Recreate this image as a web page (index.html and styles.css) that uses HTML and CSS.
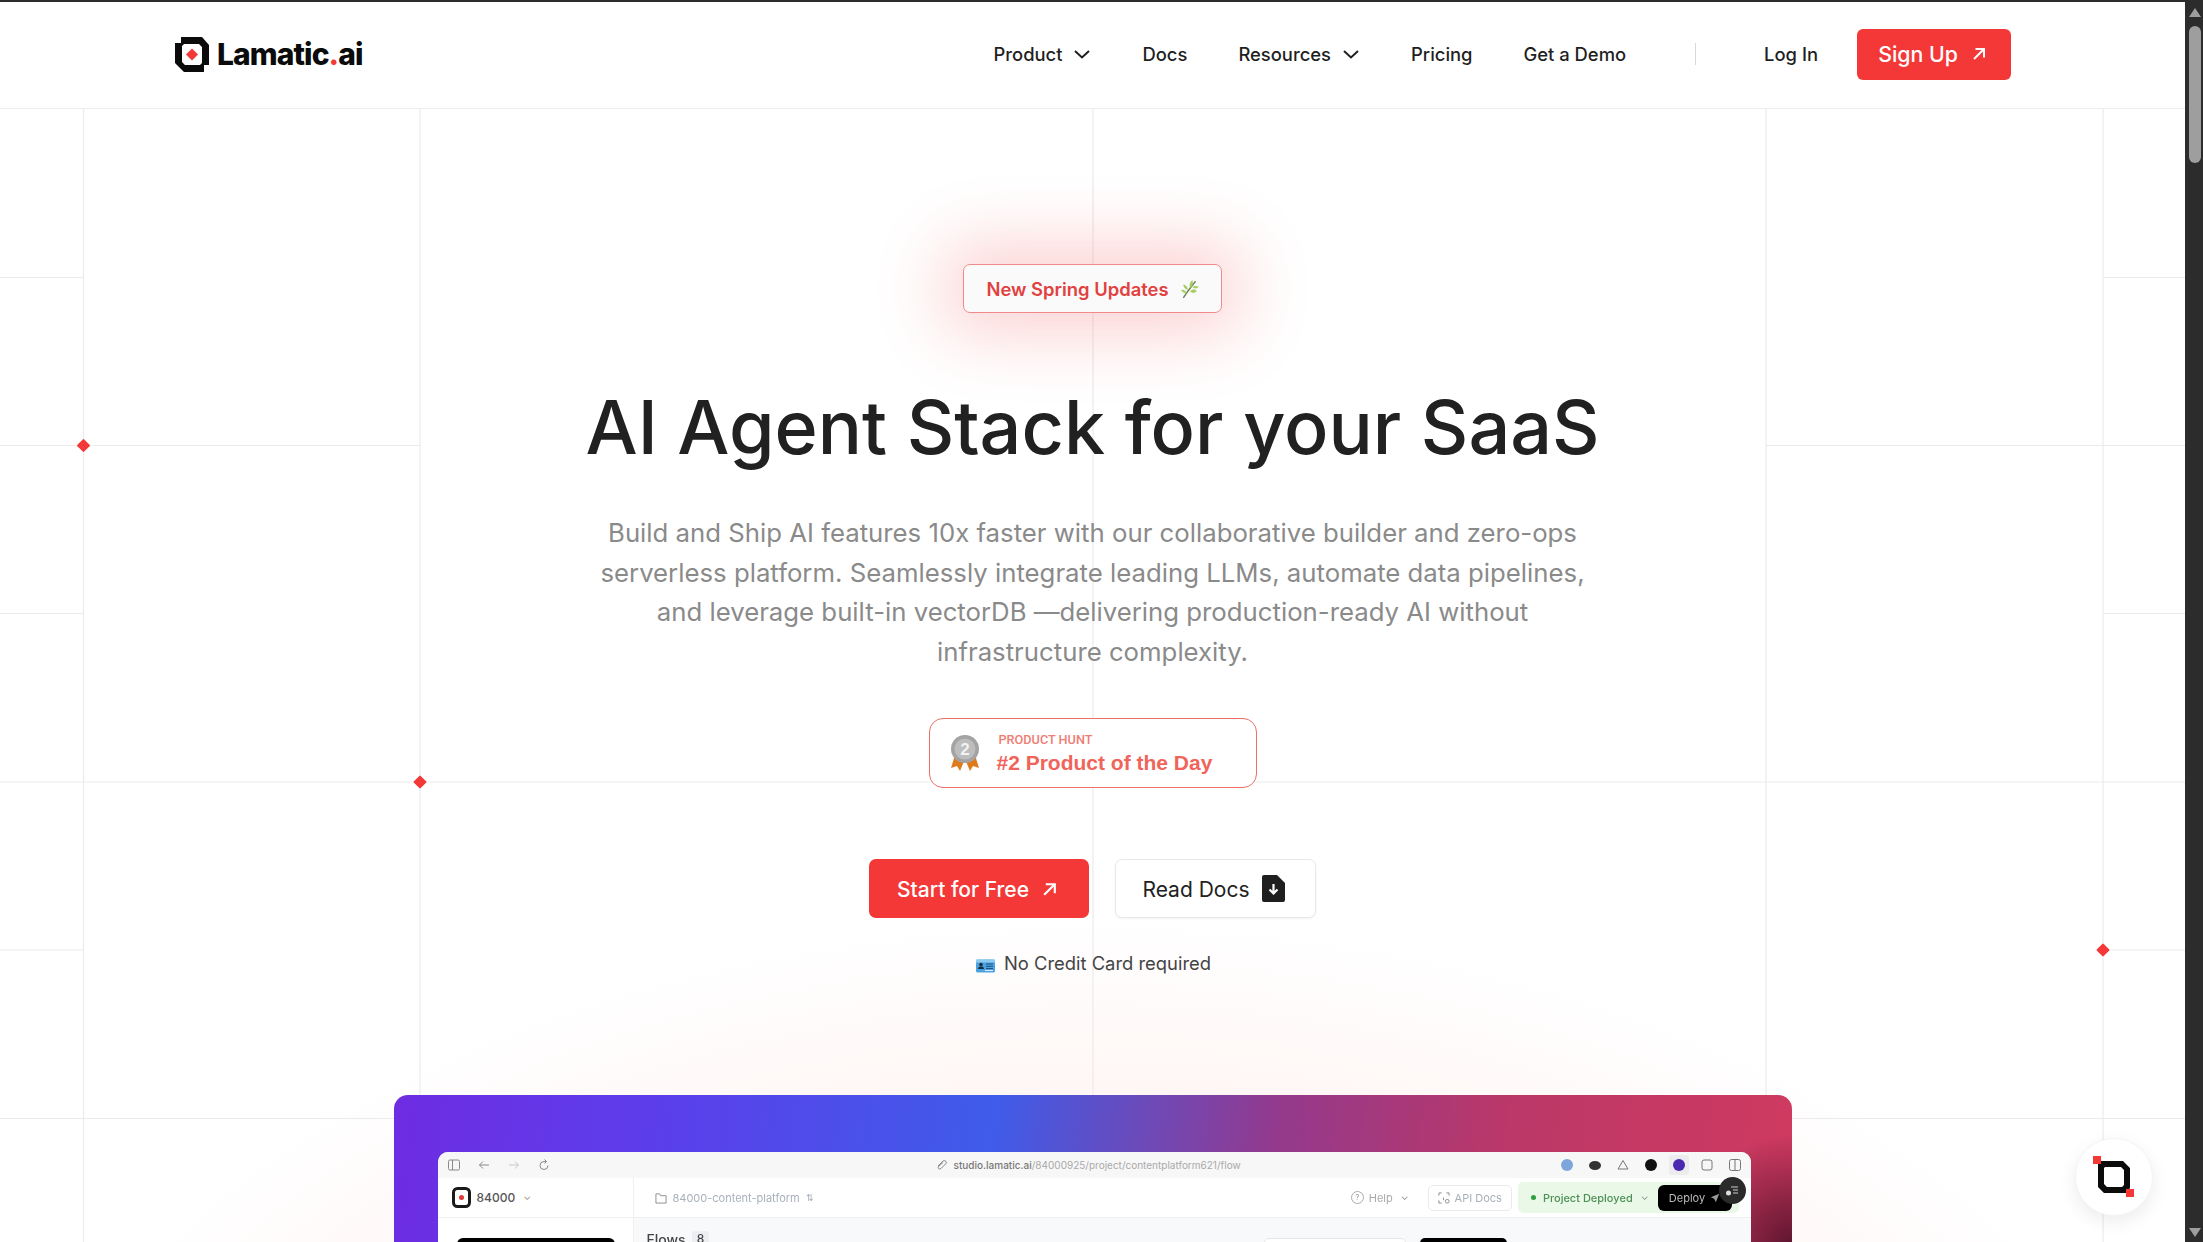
FILE: index.html
```html
<!DOCTYPE html>
<html lang="en">
<head>
  <meta charset="UTF-8">
  <meta name="viewport" content="width=device-width, initial-scale=1.0">
  <title>Lamatic.ai</title>
  <link rel="stylesheet" href="styles.css">
</head>
<body>
  <div class="app">
    <div class="page">
      <header class="topbar">
        <a class="logo" href="#">
          <svg class="logo-icon" viewBox="0 0 34 35">
            <path fill="#0b0b0b" fill-rule="evenodd" d="M6 0H27L34 8V28H29V35H9L0 26V6H6ZM9 7L7 9V25L10 28H25L27 26V10L24 7Z"/>
            <path fill="#f43838" d="M17 11.5L23 17.5L17 23.5L11 17.5Z"/>
          </svg>
          <span class="logo-text">Lamatic<span class="logo-dot">.</span>ai</span>
        </a>
        <nav class="nav">
          <a class="nav-link" href="#">Product
            <svg class="chevron" viewBox="0 0 18 10"><path d="M2 2L9 8.5L16 2"/></svg>
          </a>
          <a class="nav-link" href="#">Docs</a>
          <a class="nav-link" href="#">Resources
            <svg class="chevron" viewBox="0 0 18 10"><path d="M2 2L9 8.5L16 2"/></svg>
          </a>
          <a class="nav-link" href="#">Pricing</a>
          <a class="nav-link" href="#">Get a Demo</a>
          <span class="nav-divider"></span>
          <a class="nav-link login" href="#">Log In</a>
          <a class="signup" href="#">Sign Up
            <svg class="arrow small" viewBox="0 0 16 16"><path d="M3 13L13 3M4.5 3H13V11.5"/></svg>
          </a>
        </nav>
      </header>

      <main class="hero">
        <div class="glow"></div>
        <svg class="grid-lines" viewBox="0 0 2185 1134" width="2185" height="1134">
          <path d="M83.5 0V1134M420 0V1134M1093 0V1134M1766 0V1134M2103 0V1134"/>
          <path d="M0 168.5H83.5M2103 168.5H2185"/>
          <path d="M0 336.5H420M1766 336.5H2185"/>
          <path d="M0 504.5H83.5M2103 504.5H2185"/>
          <path d="M0 673H2185"/>
          <path d="M0 841H83.5M2103 841H2185"/>
          <path d="M0 1009.5H2185"/>
          <g class="diamonds">
            <rect x="-4.8" y="-4.8" width="9.6" height="9.6" rx="1" transform="translate(83.5 336.5) rotate(45)"/>
            <rect x="-4.8" y="-4.8" width="9.6" height="9.6" rx="1" transform="translate(420 673) rotate(45)"/>
            <rect x="-4.8" y="-4.8" width="9.6" height="9.6" rx="1" transform="translate(2103 841) rotate(45)"/>
          </g>
        </svg>

        <a class="spring-badge" href="#">
          <span>New Spring Updates</span>
          <svg class="leaf" viewBox="0 0 16 18">
            <path fill="none" stroke="#6f7f55" stroke-width="1.2" d="M2 17C5 12 9 7 13 2"/>
            <path fill="#a5cf63" d="M8 8C7 5 8 3 10 1C11 3 11 6 8 8ZM6 10C4 9 2 8 2 5C4 5 6 7 6 10ZM10 7C12 6 14 6 16 7C14 9 12 9 10 7ZM8 11C10 9 13 9 14 11C12 13 10 13 8 11ZM5 13C3 13 1 12 0 10C2 9 4 10 5 13Z"/>
          </svg>
        </a>

        <h1 class="title">AI Agent Stack for your SaaS</h1>

        <p class="lead">Build and Ship AI features 10x faster with our collaborative builder and zero-ops serverless platform. Seamlessly integrate leading LLMs, automate data pipelines, and leverage built-in vectorDB —delivering production-ready AI without infrastructure complexity.</p>

        <a class="ph-badge" href="#">
          <svg class="medal" viewBox="0 0 28 37">
            <path fill="#e07b1c" d="M4 20L0 33L6 31L9 36L14 24Z"/>
            <path fill="#e07b1c" d="M24 20L28 33L22 31L19 36L14 24Z"/>
            <circle cx="14" cy="14" r="14" fill="#a3a3a3"/>
            <circle cx="14" cy="14" r="10.5" fill="#bdbdbd"/>
            <text class="medal-num" x="14" y="20" text-anchor="middle">2</text>
          </svg>
          <span class="ph-text">
            <span class="ph-small">PRODUCT HUNT</span>
            <span class="ph-big">#2 Product of the Day</span>
          </span>
        </a>

        <div class="cta-row">
          <a class="btn btn-red" href="#">Start for Free
            <svg class="arrow" viewBox="0 0 16 16"><path d="M3 13L13 3M4.5 3H13V11.5"/></svg>
          </a>
          <a class="btn btn-white" href="#">Read Docs
            <svg class="file-icon" viewBox="0 0 23 27">
              <path fill="#1f1f1f" d="M2 0H15L23 8V25Q23 27 21 27H2Q0 27 0 25V2Q0 0 2 0Z"/>
              <path fill="none" stroke="#fff" stroke-width="2.2" d="M11.5 9V18M7.5 14.5L11.5 18.5L15.5 14.5"/>
            </svg>
          </a>
        </div>

        <div class="no-card">
          <svg class="id-card" viewBox="0 0 19 14">
            <rect y="0.5" width="19" height="13" rx="1.5" fill="#4aa3e0"/>
            <rect y="0.5" width="19" height="3" fill="#8ccbf2"/>
            <circle cx="5" cy="5.5" r="1.8" fill="#1d2b3a"/>
            <path fill="#1d2b3a" d="M2 10C2 8 3.5 7.5 5 7.5S8 8 8 10Z"/>
            <path stroke="#1d4f80" stroke-width="1" d="M10 5H17M10 7.3H17M10 9.6H17"/>
            <rect x="9" y="11" width="8" height="1" fill="#dbeefa"/>
          </svg>
          <span>No Credit Card required</span>
        </div>

        <section class="mock">
          <div class="mock-window">
            <div class="mock-browser">
              <div class="mock-tools">
                <svg class="tool" viewBox="0 0 12 12"><rect x="0.5" y="1" width="11" height="10" rx="1.5"/><path d="M4.5 1V11"/></svg>
                <svg class="tool" viewBox="0 0 12 12"><path d="M11 6H1.5M5 2.5L1.5 6L5 9.5"/></svg>
                <svg class="tool faint" viewBox="0 0 12 12"><path d="M1 6H10.5M7 2.5L10.5 6L7 9.5"/></svg>
                <svg class="tool" viewBox="0 0 12 12"><path d="M10 6.5A4 4 0 1 1 6 2.5H8M6.5 0.5L8.5 2.5L6.5 4.5"/></svg>
              </div>
              <div class="mock-url">
                <svg class="tool clip" viewBox="0 0 12 12"><path d="M2 7L7 2Q9 1 10 2.5T9.5 5L5 9.5Q3.5 10.5 2.5 9.5T3 7L7 3.5"/></svg>
                <span><b>studio.lamatic.ai</b>/84000925/project/contentplatform621/flow</span>
              </div>
              <div class="mock-exts">
                <i class="ext ext-blue"></i>
                <i class="ext ext-disk"></i>
                <svg class="ext-svg" viewBox="0 0 12 12"><path d="M6 1.5L11 10H1Z"/></svg>
                <i class="ext ext-black"></i>
                <span class="ext-active"><i class="ext ext-purple"></i></span>
                <svg class="ext-svg" viewBox="0 0 12 12"><rect x="1" y="1" width="10" height="10" rx="2"/></svg>
                <svg class="ext-svg" viewBox="0 0 12 12"><rect x="0.5" y="0.5" width="11" height="11" rx="2"/><path d="M6 0.5V11.5"/></svg>
              </div>
            </div>
            <div class="mock-head">
              <div class="mock-side">
                <svg class="mock-logo" viewBox="0 0 19 21">
                  <rect x="1.5" y="1.5" width="16" height="18" rx="4" fill="none" stroke="#1a1a1a" stroke-width="3"/>
                  <circle cx="9.5" cy="10.5" r="2.5" fill="#e23a3a"/>
                </svg>
                <span class="team">84000</span>
                <span class="mini-chev">⌄</span>
              </div>
              <div class="mock-crumb">
                <svg class="tool" viewBox="0 0 13 13"><path d="M1 2H5L6 4H12V12H1Z"/></svg>
                <span>84000-content-platform</span>
                <span class="updown">⇅</span>
              </div>
              <div class="mock-actions">
                <span class="help-circle">?</span>
                <span class="help">Help</span>
                <span class="mini-chev">⌄</span>
                <span class="api-docs">
                  <svg class="tool" viewBox="0 0 13 13"><path d="M1 4V1H4M9 1H12V4M1 9V12H4M6 6V9"/><circle cx="10" cy="10" r="2"/></svg>
                  API Docs
                </span>
                <span class="deployed">
                  <i class="green-dot"></i>
                  <span class="deployed-text">Project Deployed</span>
                  <span class="mini-chev">⌄</span>
                  <span class="deploy">Deploy
                    <svg class="rocket" viewBox="0 0 12 12"><path d="M11 1L1 5L5 7L7 11Z"/></svg>
                  </span>
                </span>
                <span class="dark-fab">
                  <svg viewBox="0 0 14 14"><path d="M6 3H13M8 6H13M8 9H13"/><circle cx="3.5" cy="9" r="2.5" fill="#ddd" stroke="none"/></svg>
                </span>
              </div>
            </div>
            <div class="mock-body">
              <div class="mock-side"><div class="new-btn"></div></div>
              <div class="mock-flows">
                <span class="flows-title">Flows</span>
                <span class="flows-count">8</span>
                <span class="flows-search"></span>
                <span class="flows-new"></span>
              </div>
            </div>
          </div>
        </section>

        <button class="chat-fab">
          <svg viewBox="0 0 42 42" width="42" height="42">
            <path fill="#0b0b0b" fill-rule="evenodd" d="M8 5H30L37 12V32L33 37H11L5 31V8ZM12 11L11 12V28L14 31H29L31 29V14L28 11Z"/>
            <rect x="0" y="0" width="8" height="8" fill="#f43838"/>
            <rect x="33" y="33" width="8" height="8" fill="#f43838"/>
          </svg>
        </button>
      </main>
    </div>

    <div class="scrollbar">
      <span class="scroll-up"></span>
      <span class="scroll-thumb"></span>
      <span class="scroll-down"></span>
    </div>
  </div>
</body>
</html>
```

FILE: styles.css
```css
* {
  box-sizing: border-box;
  margin: 0;
  padding: 0;
}

html, body {
  height: 100%;
  overflow: hidden;
}

body {
  background: #fff;
  color: #222;
  font-family: 'Inter', 'Liberation Sans', sans-serif;
  border-top: 2px solid #2c2c2c;
}

a {
  color: inherit;
  text-decoration: none;
}

.app {
  display: flex;
  height: 1240px;
  overflow: hidden;
}

.page {
  flex: 1;
  min-width: 0;
  display: flex;
  flex-direction: column;
}

/* header */
.topbar {
  height: 107px;
  flex: none;
  display: flex;
  align-items: center;
  justify-content: space-between;
  padding: 0 174px 2px 175px;
  background: #fff;
  border-bottom: 1px solid #ececec;
  position: relative;
  z-index: 2;
}

.logo {
  display: flex;
  align-items: center;
  gap: 8px;
}

.logo-icon {
  width: 34px;
  height: 35px;
}

.logo-text {
  font-size: 30px;
  font-weight: 800;
  letter-spacing: -0.9px;
  color: #0b0b0b;
}

.logo-dot {
  color: #f43838;
}

.nav {
  display: flex;
  align-items: center;
  font-size: 18.4px;
  font-weight: 500;
  color: #1f1f1f;
}

.nav-link {
  display: flex;
  align-items: center;
  gap: 11px;
  margin-right: 51px;
}

.chevron {
  width: 18px;
  height: 10px;
  fill: none;
  stroke: #1f1f1f;
  stroke-width: 2;
}

.nav-divider {
  width: 1px;
  height: 22px;
  background: #d8d8d8;
  margin: 0 68px 0 18px;
}

.login {
  margin-right: 39px;
}

.signup {
  height: 51px;
  width: 154px;
  display: flex;
  align-items: center;
  justify-content: center;
  gap: 13px;
  padding-right: 3px;
  background: #f43838;
  border-radius: 6px;
  color: #fff;
  font-size: 21.3px;
}

.arrow {
  width: 17px;
  height: 17px;
  fill: none;
  stroke: #fff;
  stroke-width: 2;
}

.arrow.small {
  width: 16px;
  height: 16px;
}

/* hero */
.hero {
  flex: 1;
  position: relative;
  display: flex;
  flex-direction: column;
  align-items: center;
  padding-top: 155px;
  overflow: hidden;
}

.hero > * {
  flex: none;
}

.glow {
  position: absolute;
  inset: 0;
  background: radial-gradient(ellipse 1130px 730px at 50% 1540px, #fbd9d6 0%, #fde9e7 45%, #fff6f5 75%, rgba(255, 255, 255, 0) 100%);
}

.grid-lines {
  position: absolute;
  top: 0;
  left: 0;
  fill: none;
  stroke: #ebebeb;
  stroke-width: 1.2;
}

.diamonds {
  fill: #f43838;
  stroke: none;
}

.spring-badge {
  position: relative;
  width: 259px;
  height: 49px;
  display: flex;
  align-items: center;
  justify-content: center;
  gap: 12px;
  background: #fafafa;
  border: 1px solid #f08a8a;
  border-radius: 7px;
  box-shadow: 0 0 70px 18px rgba(244, 56, 56, 0.24);
  color: #e14141;
  font-size: 18.4px;
  font-weight: 600;
}

.leaf {
  width: 18px;
  height: 20px;
}

.title {
  position: relative;
  margin-top: 75px;
  font-size: 73.6px;
  line-height: 80px;
  font-weight: 500;
  color: #212121;
  white-space: nowrap;
}

.lead {
  position: relative;
  margin-top: 45px;
  width: 1000px;
  text-align: center;
  font-size: 25.75px;
  line-height: 39.5px;
  color: #8a8a8a;
}

.ph-badge {
  position: relative;
  margin-top: 47px;
  width: 328px;
  height: 70px;
  display: flex;
  align-items: center;
  gap: 18px;
  padding: 1px 0 0 21px;
  background: #fff;
  border: 1.5px solid #ee7068;
  border-radius: 14px;
}

.medal {
  width: 28px;
  height: 37px;
  flex: none;
}

.medal-num {
  font-family: 'Liberation Sans', sans-serif;
  font-size: 17px;
  font-weight: 700;
  fill: #f2f2f2;
}

.ph-text {
  display: flex;
  flex-direction: column;
  font-family: 'Liberation Sans', sans-serif;
  color: #f0645a;
}

.ph-small {
  font-size: 12.7px;
  line-height: 15px;
  padding-left: 2px;
  color: #ee7d74;
  font-family: 'Roboto', sans-serif;
  font-weight: 500;
}

.ph-big {
  margin-top: 3px;
  font-size: 21px;
  line-height: 26px;
  font-weight: 700;
}

.cta-row {
  position: relative;
  margin-top: 71px;
  display: flex;
  gap: 26px;
}

.btn {
  height: 59px;
  display: flex;
  align-items: center;
  justify-content: center;
  border-radius: 7px;
  font-size: 21px;
  font-weight: 500;
}

.btn-red {
  width: 220px;
  gap: 12px;
  padding: 1px 3px 0 0;
  background: #f43838;
  color: #fff;
}

.btn-white {
  width: 201px;
  gap: 12px;
  padding: 1px 4px 0 0;
  background: #fff;
  border: 1px solid #e8e8e8;
  box-shadow: 0 1px 2px rgba(0, 0, 0, 0.05);
  color: #222;
  font-weight: 400;
}

.file-icon {
  width: 23px;
  height: 27px;
  margin-top: -1px;
}

.no-card {
  position: relative;
  margin-top: 31px;
  height: 28px;
  display: flex;
  align-items: center;
  gap: 9px;
  padding-left: 2px;
  font-size: 18.4px;
  color: #444;
}

.id-card {
  width: 19px;
  height: 14px;
  margin-top: 5px;
}

/* product shot, blurred like the scaled video in the page */
.mock {
  position: relative;
  margin-top: 118px;
  width: 1398px;
  height: 300px;
  padding: 57px 41px 0 44px;
  border-radius: 14px 14px 0 0;
  background:
    radial-gradient(circle 110px at 100% 150px, #5e1530 0%, rgba(94, 21, 48, 0) 100%),
    linear-gradient(97deg, #6e2ce2 0%, #5a40ea 20%, #3f5cea 42%, #94398c 62%, #bb3868 78%, #d13a5f 100%);
}

.mock-window {
  height: 243px;
  background: #f8f9fb;
  border-radius: 10px 10px 0 0;
  overflow: hidden;
  filter: blur(0.7px);
  font-size: 11px;
  color: #a8b0ba;
}

.mock-browser {
  height: 26px;
  display: grid;
  grid-template-columns: 488px auto 1fr;
  align-items: center;
  padding: 0 10px;
  background: #f7f7f7;
}

.mock-tools {
  display: flex;
  align-items: center;
  gap: 18px;
}

.tool {
  width: 12px;
  height: 12px;
  fill: none;
  stroke: #8a8a8a;
  stroke-width: 1;
  flex: none;
}

.tool.faint {
  stroke: #c8c8c8;
}

.mock-url {
  display: flex;
  align-items: center;
  gap: 6px;
  font-size: 10px;
  color: #a9a9a9;
  white-space: nowrap;
}

.mock-url b {
  font-weight: 500;
  color: #777;
}

.mock-exts {
  display: flex;
  align-items: center;
  justify-content: flex-end;
  gap: 16px;
  padding-right: 0;
}

.ext {
  display: block;
  width: 12px;
  height: 12px;
  border-radius: 50%;
}

.ext-blue {
  background: #7da7dc;
}

.ext-disk {
  height: 9px;
  background: #333;
}

.ext-black {
  background: #111;
}

.ext-purple {
  background: #4a2ab0;
}

.ext-active {
  padding: 4px;
  margin: -4px;
  background: #ececec;
  border-radius: 3px;
}

.ext-svg {
  width: 12px;
  height: 12px;
  fill: none;
  stroke: #777;
}

.mock-head {
  height: 40px;
  display: flex;
  align-items: center;
  background: #fff;
  border-bottom: 1px solid #f0f0f0;
}

.mock-side {
  width: 196px;
  height: 100%;
  flex: none;
  display: flex;
  align-items: center;
  padding-left: 14px;
  border-right: 1px solid #f0f0f0;
  background: #fff;
}

.mock-logo {
  width: 19px;
  height: 21px;
  margin-right: 6px;
}

.team {
  font-size: 12px;
  font-weight: 500;
  color: #555;
}

.mini-chev {
  margin: -4px 0 0 8px;
  font-size: 10px;
  color: #888;
}

.mock-crumb {
  display: flex;
  align-items: center;
  gap: 6px;
  padding-left: 21px;
  white-space: nowrap;
}

.updown {
  font-size: 9px;
}

.mock-actions {
  position: relative;
  margin-left: auto;
  display: flex;
  align-items: center;
  font-size: 11px;
  padding-right: 12px;
}

.help-circle {
  width: 13px;
  height: 13px;
  margin-right: 5px;
  border: 1px solid #aaa;
  border-radius: 50%;
  font-size: 8px;
  line-height: 11px;
  text-align: center;
  color: #999;
}

.help {
  color: #aaa;
}

.api-docs {
  height: 26px;
  display: flex;
  align-items: center;
  gap: 5px;
  margin-left: 19px;
  padding: 0 9px;
  border: 1px solid #e8eaee;
  border-radius: 5px;
  color: #a8b0ba;
  white-space: nowrap;
}

.deployed {
  height: 31px;
  display: flex;
  align-items: center;
  margin-left: 6px;
  padding-left: 13px;
  background: #eaf8e8;
  border-radius: 5px;
}

.green-dot {
  width: 5px;
  height: 5px;
  margin-right: 7px;
  border-radius: 50%;
  background: #2f9e3f;
}

.deployed-text {
  font-weight: 500;
  color: #4d8f55;
  white-space: nowrap;
}

.deploy {
  height: 26px;
  width: 74px;
  display: flex;
  align-items: center;
  justify-content: center;
  gap: 5px;
  margin: 0 7px 0 9px;
  background: #000;
  border-radius: 6px;
  color: #bbb;
}

.rocket {
  width: 10px;
  height: 10px;
  fill: #999;
}

.dark-fab {
  position: absolute;
  right: 5px;
  top: -5px;
  width: 27px;
  height: 27px;
  display: flex;
  align-items: center;
  justify-content: center;
  border-radius: 50%;
  background: #2a2a2a;
}

.dark-fab svg {
  width: 14px;
  height: 14px;
  fill: none;
  stroke: #ccc;
}

.mock-body {
  height: 180px;
  display: flex;
}

.mock-body .mock-side {
  align-items: flex-start;
  padding: 20px 0 0 19px;
}

.new-btn {
  width: 158px;
  height: 34px;
  background: #000;
  border-radius: 6px;
}

.mock-flows {
  flex: 1;
  display: flex;
  align-items: flex-start;
  padding: 13px 16px 0 13px;
  font-size: 14px;
  font-weight: 500;
  color: #444;
}

.flows-count {
  margin-left: 6px;
  padding: 0 5px;
  background: #eceef1;
  border-radius: 3px;
  font-size: 12px;
}

.flows-search {
  width: 142px;
  height: 30px;
  margin: 7px 0 0 auto;
  background: #fff;
  border: 1px solid #e4e6ea;
  border-radius: 5px;
}

.flows-new {
  width: 87px;
  height: 30px;
  margin: 7px 228px 0 14px;
  background: #000;
  border-radius: 5px;
}

.chat-fab {
  position: absolute;
  left: 2075px;
  top: 1029px;
  width: 78px;
  height: 78px;
  display: flex;
  align-items: center;
  justify-content: center;
  background: #fff;
  border: 1px solid #f5f5f5;
  border-radius: 50%;
  box-shadow: 0 6px 18px rgba(0, 0, 0, 0.08);
}

/* fake window scrollbar from the capture */
.scrollbar {
  width: 18px;
  flex: none;
  position: relative;
  background: #2c2c2c;
}

.scroll-up,
.scroll-down {
  position: absolute;
  left: 4px;
  width: 0;
  height: 0;
  border-left: 6px solid transparent;
  border-right: 6px solid transparent;
}

.scroll-up {
  top: 6px;
  border-bottom: 9px solid #9e9e9e;
}

.scroll-down {
  bottom: 5px;
  border-top: 9px solid #9e9e9e;
}

.scroll-thumb {
  position: absolute;
  top: 24px;
  left: 4px;
  width: 12px;
  height: 137px;
  border-radius: 6px;
  background: #9e9e9e;
}
```
